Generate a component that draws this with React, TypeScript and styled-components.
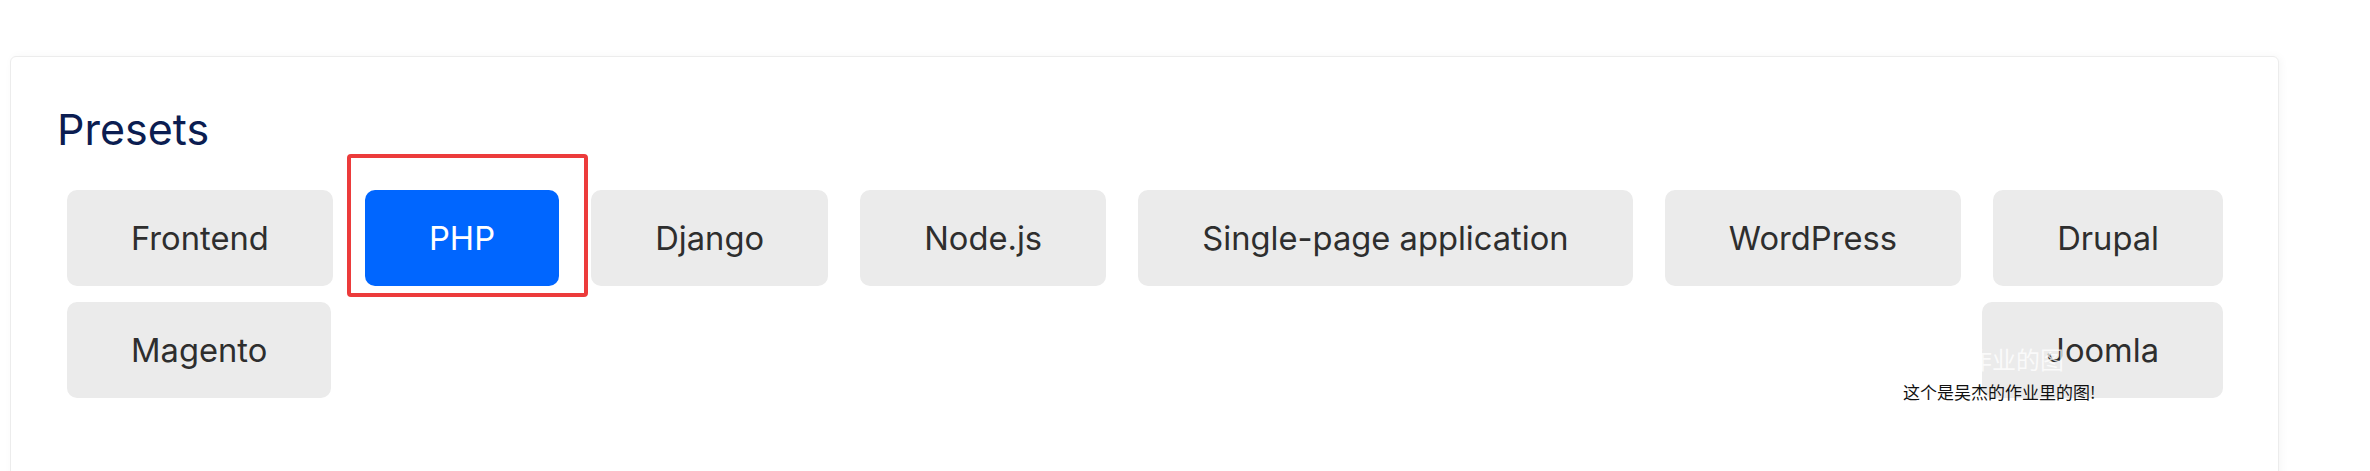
import React from "react";
import styled, { createGlobalStyle } from "styled-components";

const Global = createGlobalStyle`
  html, body {
    margin: 0;
    padding: 0;
    background: #ffffff;
  }
  body {
    font-family: Inter, "Noto Sans", "Noto Sans CJK SC", sans-serif;
    overflow: hidden;
  }
`;

const Page = styled.div`
  padding: 56px 0 0 10px;
  width: 2370px;
  height: 471px;
  box-sizing: border-box;
  overflow: hidden;
`;

const Card = styled.section`
  position: relative;
  width: 2269px;
  box-sizing: border-box;
  border: 1px solid #ececec;
  border-radius: 6px;
  box-shadow: 2px 0 8px rgba(0, 0, 0, 0.04);
  padding: 47px 46px 120px 46px;
  display: flex;
  flex-direction: column;
  gap: 34px;
`;

const Title = styled.h2`
  margin: 0;
  font-family: Inter, sans-serif;
  font-weight: 400;
  font-size: 43px;
  line-height: 1.2;
  color: #0b1d51;
`;

const Presets = styled.div`
  display: flex;
  flex-wrap: wrap;
  justify-content: space-between;
  column-gap: 20px;
  row-gap: 16px;
  margin: 0 9px 0 10px;
`;

const Slot = styled.div`
  position: relative;
`;

const PresetButton = styled.button<{ $active?: boolean }>`
  height: 96px;
  padding: 0 64px;
  border: none;
  border-radius: 10px;
  font-family: Inter, sans-serif;
  font-size: 32.7px;
  font-weight: 400;
  background: ${(p) => (p.$active ? "#0066ff" : "#ebebeb")};
  color: ${(p) => (p.$active ? "#ffffff" : "#2e2e2e")};
  cursor: pointer;
  white-space: nowrap;
`;

const Highlight = styled.div`
  position: absolute;
  top: -36px;
  left: -18px;
  right: -29px;
  bottom: -11px;
  border: 4px solid #ec3b3b;
  border-radius: 4px;
  pointer-events: none;
`;

const Watermark = styled.div`
  position: absolute;
  left: 1892px;
  top: 290px;
  display: flex;
  flex-direction: column;
  gap: 12px;
  pointer-events: none;
  font-family: "Noto Sans CJK SC", sans-serif;
  white-space: nowrap;
`;

const GhostText = styled.div`
  margin-left: 17px;
  font-size: 24px;
  line-height: 1;
  color: rgba(255, 255, 255, 0.75);
`;

const Caption = styled.div`
  font-size: 17px;
  line-height: 1;
  color: #111111;
`;

const presets = [
  "Frontend",
  "PHP",
  "Django",
  "Node.js",
  "Single-page application",
  "WordPress",
  "Drupal",
  "Magento",
  "Joomla",
];

export default function App() {
  return (
    <Page>
      <Global />
      <Card>
        <Title>Presets</Title>
        <Presets>
          {presets.map((name) => (
            <Slot key={name}>
              <PresetButton $active={name === "PHP"}>{name}</PresetButton>
              {name === "PHP" && <Highlight />}
            </Slot>
          ))}
        </Presets>
        <Watermark>
          <GhostText>吴杰作业的图</GhostText>
          <Caption>这个是吴杰的作业里的图!</Caption>
        </Watermark>
      </Card>
    </Page>
  );
}
